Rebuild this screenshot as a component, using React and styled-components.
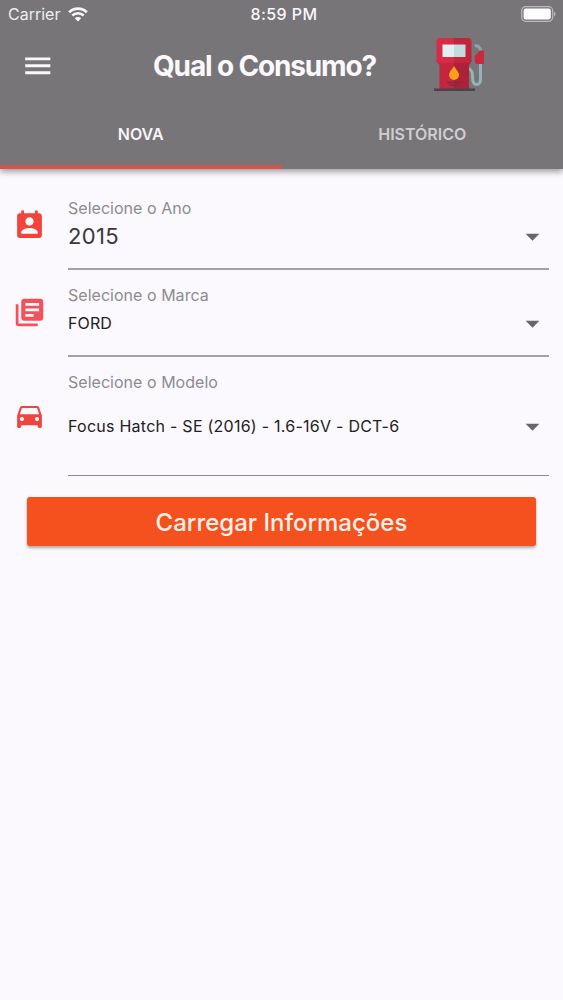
import styled, { createGlobalStyle } from 'styled-components';
import {
  MdArrowDropDown,
  MdDirectionsCar,
  MdLibraryBooks,
  MdMenu,
  MdPermContactCalendar,
} from 'react-icons/md';

const GlobalStyle = createGlobalStyle`
  * {
    box-sizing: border-box;
  }
  body {
    margin: 0;
    background: #fbf9fd;
    font-family: Inter, Roboto, sans-serif;
  }
`;

const Screen = styled.div`
  min-height: 1000px;
  background: #fbf9fd;
`;

const Header = styled.header`
  display: flex;
  flex-direction: column;
  height: 169px;
  background: #777578;
  color: #fbf8fc;
  box-shadow: 0 3px 6px rgba(0, 0, 0, 0.36);
`;

const StatusBar = styled.div`
  display: grid;
  grid-template-columns: 1fr auto 1fr;
  align-items: center;
  height: 28px;
  padding: 0 7px 0 8px;
  font-size: 16px;
  line-height: 20px;
`;

const Carrier = styled.div`
  display: flex;
  align-items: center;
  gap: 8px;
  letter-spacing: 0;
  color: #efedf0;
`;

const Clock = styled.div`
  font-weight: 500;
  letter-spacing: 0.4px;
  padding-left: 4px;
`;

const Battery = styled.svg`
  justify-self: end;
`;

const AppBar = styled.div`
  display: flex;
  align-items: center;
  height: 75px;
  padding-left: 21px;
`;

const MenuButton = styled.button`
  display: flex;
  width: 132px;
  padding: 0;
  border: none;
  background: none;
  color: inherit;
`;

const Title = styled.h1`
  width: 280px;
  margin: 0;
  padding-top: 1px;
  font-size: 28px;
  font-weight: 700;
  line-height: 34px;
  letter-spacing: -1.15px;
  white-space: nowrap;
`;

const Tabs = styled.nav`
  display: grid;
  grid-template-columns: 1fr 1fr;
  flex: 1;
`;

const Tab = styled.button`
  padding: 0;
  border: none;
  border-bottom: 4px solid ${(props) => (props.$active ? '#d4534a' : 'transparent')};
  background: none;
  color: ${(props) => (props.$active ? '#f7f4f8' : '#d0ced1')};
  font-family: inherit;
  font-size: 16px;
  font-weight: 600;
`;

const Form = styled.main`
  padding: 17px 14px 0 13px;
`;

const Field = styled.div`
  display: grid;
  grid-template-columns: 55px 1fr;
  height: ${(props) => props.$height}px;
`;

const FieldIcon = styled.div`
  display: flex;
  align-items: center;
  padding-bottom: ${(props) => props.$lift}px;
  color: ${(props) => props.$color};
`;

const Select = styled.div`
  display: flex;
  flex-direction: column;
  padding-top: ${(props) => props.$top}px;
  border-bottom: ${(props) => (props.$thin ? '1px solid #8d8b90' : '2px solid #a3a1a6')};
`;

const Label = styled.label`
  font-size: 16px;
  line-height: 22px;
  letter-spacing: 0.03px;
  color: #8d8b90;
`;

const Value = styled.div`
  display: flex;
  flex: 1;
  align-items: center;
  justify-content: space-between;
  padding-bottom: ${(props) => props.$bottom}px;
  font-size: ${(props) => (props.$large ? 22 : 16)}px;
  letter-spacing: ${(props) => props.$spacing};
  color: ${(props) => (props.$large ? '#39373b' : '#222024')};
`;

const Arrow = styled(MdArrowDropDown)`
  color: #68666a;
`;

const Submit = styled.button`
  display: block;
  width: 509px;
  height: 49px;
  margin: 21px 0 0 14px;
  padding: 2px 0 0;
  border: none;
  border-radius: 3px;
  background: #f4511e;
  box-shadow: 0 2px 3px rgba(0, 0, 0, 0.32);
  color: #fff1ea;
  font-family: inherit;
  font-size: 24px;
  font-weight: 500;
`;

function WifiIcon() {
  return (
    <svg width="20" height="15" viewBox="0 0 20 15" fill="none">
      <path d="M1.2 5.2a12.6 12.6 0 0 1 17.6 0" stroke="#fbf8fc" strokeWidth="2.7" />
      <path d="M4.3 8.5a8.2 8.2 0 0 1 11.4 0" stroke="#fbf8fc" strokeWidth="2.5" />
      <path d="M10 14.6 6.8 11.3a4.6 4.6 0 0 1 6.4 0Z" fill="#fbf8fc" />
    </svg>
  );
}

function BatteryIcon() {
  return (
    <Battery width="35" height="16" viewBox="0 0 35 16">
      <rect x="0.7" y="0.7" width="31" height="14.6" rx="4" fill="none" stroke="#bcbabd" strokeWidth="1.2" />
      <rect x="2.6" y="2.6" width="27.2" height="10.8" rx="2.2" fill="#fff" />
      <path d="M33 5.4a3 3 0 0 1 0 5.2Z" fill="#bcbabd" />
    </Battery>
  );
}

function FuelPump() {
  return (
    <svg width="54" height="56" viewBox="0 0 54 56">
      {/* hose and nozzle */}
      <path
        d="M36 30.500c3 1.500 3.500 4 3.500 8 0 5.500 1 8 4 8s4-2.500 4-6V25"
        fill="none"
        stroke="#93b5ba"
        strokeWidth="3"
      />
      <path d="M41.800 8c3-1 5 1 6 5" fill="none" stroke="#82a9b0" strokeWidth="3" />
      <path d="M46.500 12.500h4.500v13.500h-7.500l-1.700-2v-6Z" fill="#c9283f" />
      {/* body */}
      <path d="M3.500 22h17.500v29H6.500V27l-3-3.500Z" fill="#c3263d" />
      <path d="M21 22h17.500v1.500L36 27v24H21Z" fill="#ad2238" />
      <path d="M7 0h14v25H7c-2 0-3.500-1.500-3.500-3.500V3.500C3.500 1.500 5 0 7 0Z" fill="#d62c46" />
      <path d="M21 0h14c2 0 3.500 1.500 3.500 3.500v18c0 2-1.500 3.500-3.500 3.500H21Z" fill="#c1263e" />
      <path d="M9.500 6.500H21v12.500H9.500Z" fill="#e2eef2" />
      <path d="M21 6.500h11.500v12.500H21Z" fill="#c3dcdf" />
      <path d="M21 28c2.500 4 5 6.500 5 9a5 5 0 0 1-10 0c0-2.500 2.500-5 5-9Z" fill="#f9a11b" />
      <path d="M14 44.500h14M16 47h10" stroke="#842b3b" strokeWidth="1.500" />
      <path d="M1 50.500h41v2.500H1Z" fill="#48444a" />
    </svg>
  );
}

export default function App() {
  return (
    <Screen>
      <GlobalStyle />
      <Header>
        <StatusBar>
          <Carrier>
            Carrier
            <WifiIcon />
          </Carrier>
          <Clock>8:59 PM</Clock>
          <BatteryIcon />
        </StatusBar>
        <AppBar>
          <MenuButton>
            <MdMenu size={33.5} />
          </MenuButton>
          <Title>Qual o Consumo?</Title>
          <FuelPump />
        </AppBar>
        <Tabs>
          <Tab $active>NOVA</Tab>
          <Tab>HISTÓRICO</Tab>
        </Tabs>
      </Header>
      <Form>
        <Field $height={84}>
          <FieldIcon $lift={6} $color="#f1443a">
            <MdPermContactCalendar size={33} />
          </FieldIcon>
          <Select $top={11}>
            <Label>Selecione o Ano</Label>
            <Value $large $bottom={15} $spacing="0.3px">
              2015
              <Arrow size={33} />
            </Value>
          </Select>
        </Field>
        <Field $height={87}>
          <FieldIcon $lift={2} $color="#f5515a">
            <MdLibraryBooks size={33} />
          </FieldIcon>
          <Select $top={14}>
            <Label>Selecione o Marca</Label>
            <Value $bottom={15} $spacing="0.1px">
              FORD
              <Arrow size={33} />
            </Value>
          </Select>
        </Field>
        <Field $height={119}>
          <FieldIcon $lift={2} $color="#ee463c">
            <MdDirectionsCar size={33} />
          </FieldIcon>
          <Select $top={14} $thin>
            <Label>Selecione o Modelo</Label>
            <Value $bottom={16} $spacing="0.25px">
              Focus Hatch - SE (2016) - 1.6-16V - DCT-6
              <Arrow size={33} />
            </Value>
          </Select>
        </Field>
        <Submit>Carregar Informações</Submit>
      </Form>
    </Screen>
  );
}
